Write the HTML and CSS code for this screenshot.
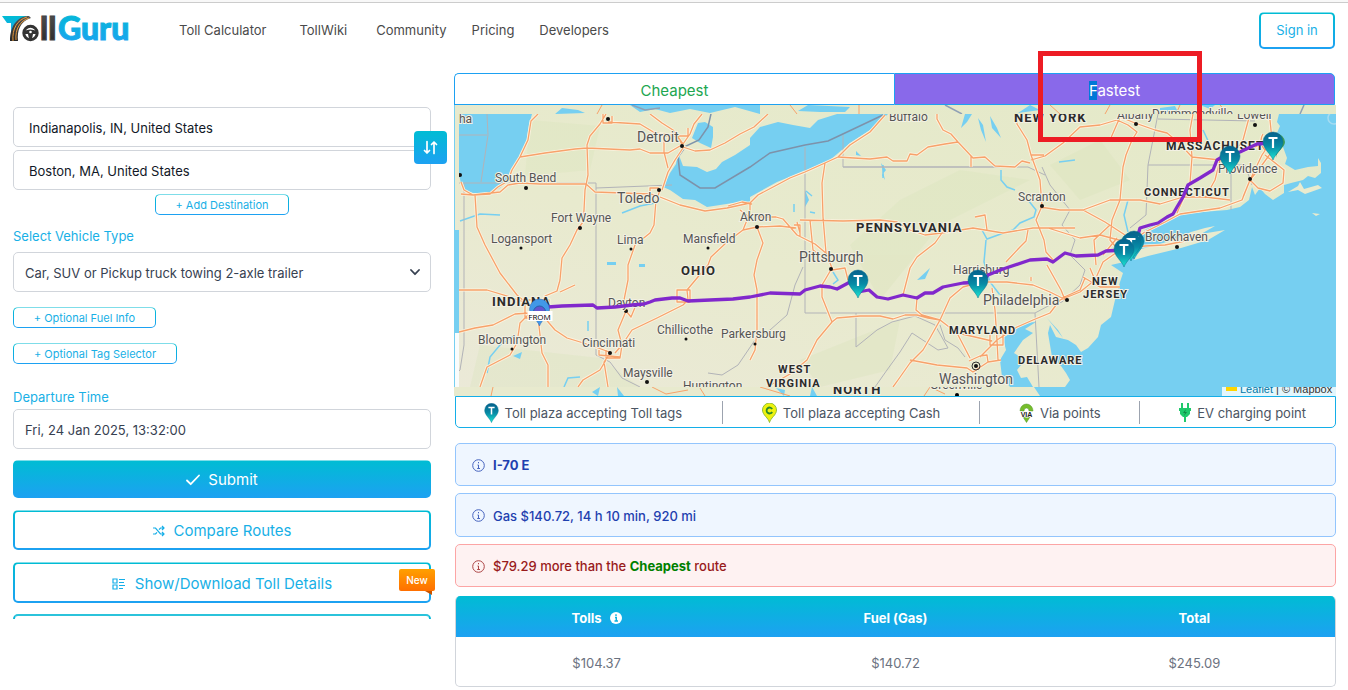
FILE: index.html
```html
<!DOCTYPE html>
<html lang="en">
<head>
<meta charset="utf-8">
<meta name="viewport" content="width=device-width, initial-scale=1">
<title>TollGuru</title>
<link rel="stylesheet" href="styles.css">
</head>
<body>
<header class="site-header">
  <a class="logo" href="#" aria-label="TollGuru home">
    <svg width="134" height="32" viewBox="0 0 134 32">
      <defs>
        <linearGradient id="brand" x1="0" y1="0" x2="0" y2="1"><stop offset="0" stop-color="#00bcd4"/><stop offset="1" stop-color="#1da1f2"/></linearGradient>
        <linearGradient id="tar" x1="0" y1="0" x2="0" y2="1"><stop offset="0" stop-color="#555"/><stop offset="1" stop-color="#262626"/></linearGradient>
      </defs>
      <path d="M2 2H29L19 8 14 14 11 22V9H7Z" fill="url(#brand)"/>
      <path d="M29 2C19 2 10 10 10 27H18C17 17 20 7 31 4Z" fill="url(#tar)"/>
      <path d="M27 3C17 6 12 15 13 27M29 4C20 7 15 15 16 26" fill="none" stroke="#e99a3c" stroke-width="1"/>
      <circle cx="30.500" cy="19" r="6.700" fill="#fff" stroke="#333" stroke-width="3"/>
      <path d="M24 17Q30 14 37 17L36 20 33 20 32 25H29L28 20 25 20Z" fill="#333"/>
      <circle cx="30.500" cy="18" r="1.300" fill="#fff"/>
      <text class="logo-text" x="40" y="26" fill="url(#tar)" stroke="#444">ll</text>
      <text class="logo-text" x="58" y="26" fill="url(#brand)" stroke="url(#brand)">Guru</text>
    </svg>
  </a>
  <nav class="nav">
    <a href="#">Toll Calculator</a>
    <a href="#">TollWiki</a>
    <a href="#">Community</a>
    <a href="#">Pricing</a>
    <a href="#">Developers</a>
  </nav>
  <button class="outline sign-in" type="button">Sign in</button>
</header>

<main class="layout">
  <form class="planner">
    <div class="stops">
      <input class="field stop" type="text" aria-label="From" value="Indianapolis, IN, United States">
      <input class="field stop" type="text" aria-label="To" value="Boston, MA, United States">
      <button class="swap" type="button" aria-label="Swap origin and destination">
        <svg width="15" height="15" viewBox="0 0 15 15" fill="none" stroke="#fff" stroke-width="1.700" stroke-linecap="round" stroke-linejoin="round"><path d="M4 1.500V13M1.500 10.500 4 13 6.500 10.500M11 13.500V2M8.500 4.500 11 2 13.500 4.500"/></svg>
      </button>
    </div>
    <button class="outline small add" type="button">+ Add Destination</button>

    <label class="label vehicle-label" for="vehicle">Select Vehicle Type</label>
    <div class="select-wrap">
      <select class="field" id="vehicle"><option>Car, SUV or Pickup truck towing 2-axle trailer</option></select>
      <svg class="chevron" width="10" height="7" viewBox="0 0 10 7"><path d="M1 1 5 5.200 9 1" fill="none" stroke="#374151" stroke-width="1.800" stroke-linecap="round" stroke-linejoin="round"/></svg>
    </div>
    <button class="outline small fuel" type="button">+ Optional Fuel Info</button>
    <button class="outline small tag" type="button">+ Optional Tag Selector</button>

    <label class="label time-label" for="departure">Departure Time</label>
    <input class="field" id="departure" type="text" value="Fri, 24 Jan 2025, 13:32:00">

    <button class="submit" type="submit">
      <svg width="14" height="12" viewBox="0 0 14 12"><path d="M1 6.500 4.700 10.200 13 1.500" fill="none" stroke="#fff" stroke-width="1.800" stroke-linecap="round" stroke-linejoin="round"/></svg>
      Submit
    </button>
    <button class="outline wide" type="button">
      <svg width="12" height="12" viewBox="0 0 12 12" fill="none" stroke="#14aee8" stroke-width="1.200"><path d="M0 3H2.500L7.500 9H11M0 9H2.500L4 7.300M6 4.700 7.500 3H11M9 1 11 3 9 5M9 7 11 9 9 11"/></svg>
      Compare Routes
    </button>
    <button class="outline wide" type="button">
      <svg width="14" height="12" viewBox="0 0 14 12" fill="none" stroke="#14aee8" stroke-width="1.200"><path d="M1 1H5V5H1ZM1 7H5V11H1ZM7 1.500H13M7 4.500H12M7 7.500H13M7 10.500H11"/></svg>
      Show/Download Toll Details
      <span class="new">New</span>
    </button>
    <div class="more"></div>
  </form>

  <section class="results">
    <div class="tabs">
      <button class="tab cheapest" type="button">Cheapest</button>
      <button class="tab fastest" type="button"><span><mark>F</mark>astest</span></button>
      <div class="highlight"></div>
    </div>

    <div class="map">
      <svg class="map-canvas" viewBox="454 105 882 291" preserveAspectRatio="xMidYMid slice" role="img" aria-label="Route from Indianapolis to Boston">
        <defs>
          <linearGradient id="land" x1="0" y1="1" x2="1" y2="0"><stop offset="0" stop-color="#ebe9d8"/><stop offset=".4" stop-color="#e8eace"/><stop offset="1" stop-color="#e4e9c8"/></linearGradient>
          <linearGradient id="pin" x1="0" y1="0" x2="0" y2="1"><stop offset="0" stop-color="#05608c"/><stop offset=".5" stop-color="#078aa5"/><stop offset="1" stop-color="#1ce6d2"/></linearGradient>
          <clipPath id="main"><rect x="459" y="114" width="877" height="273"/></clipPath>
          <clipPath id="strip-top"><rect x="454" y="105" width="882" height="9"/></clipPath>
          <clipPath id="strip-bottom"><rect x="454" y="387" width="882" height="9"/></clipPath>
          <g id="toll-pin"><path d="M0 0C-2-6-10-11-10-18A10 10 0 1 1 10-18C10-11 2-6 0 0Z" fill="url(#pin)" stroke="#0b6f8c" stroke-width=".5"/><path d="M-4.500-22H4.500M0-22V-12" stroke="#fff" stroke-width="2.200"/></g>
          <path id="roads" d="M538 114L531 121 528 140 520 157 512 170 508 181 498 187 490 194 473 195 461 194M461 182L464 190 473 195 500 192 508 185 520 183 540 184 586 184 595 192 650 194 658 196 660 190M650 194V188H659
          M520 157L545 153 575 149 587 148 630 150 640 149 650 153 668 153 680 146M606 114L600 124 590 136 587 145 588 175 585 190 584 210 583 222 577 230 570 245 562 258 560 280 557 291 545 296 540 308M603 114V123H612V116M608 122L640 124 655 133 677 136 683 146M650 114L662 123 673 130 683 144M702 114L694 124 690 134 683 144M664 136H688V128M683 147L695 151 710 150 725 143 740 134 754 127 768 114M683 148L675 160 668 172 662 190M664 136V152L668 168
          M660 197L680 205 705 211 727 208 750 203 758 195 775 186 790 178 805 172 825 163 838 157 850 145 870 132 885 115M728 206L742 202 752 204M740 210L748 216M750 203L750 214 759 217 776 217 783 219 790 227 797 235 815 244 827 254M838 157L870 159 887 157 893 161 907 161 910 154 917 155 928 147 945 144 958 142 973 158 985 157 995 166 1015 167 1022 161 1030 163M937 114V119L943 130 951 134 958 142M971 156V167M1017 114V124L1027 140 1031 155 1040 180 1042 206 1036 220 1044 240 1046 252 1055 262M1031 160L1045 156 1063 143 1080 127 1100 125 1117 120 1128 125M1031 155H1044
          M656 200L654 225 650 233 635 245 628 265 628 280 624 300 626 311 618 330 622 345 615 353M626 311L631 317 636 305M743 230L727 242 711 257 708 265 687 290 688 300 683 305 657 318 632 330 622 345 620 358H606V350M677 290H690V302H677ZM750 212L747 220 743 230 757 227 780 226 796 228M757 227L763 243 757 260 754 275 757 290 757 330 755 350 750 360M800 220L843 221 880 220 897 222 910 230 925 235 942 233 973 228 1003 233 1033 228 1075 228M942 233L935 243 917 257 910 268 903 295M825 163L822 183 823 217 826 253M797 222L800 233M810 220L813 250 830 262M794 225H800V236M975 217L985 215 987 230
          M826 253L832 268 822 285 822 297 832 322 817 340 807 360 790 374 767 387M832 270L845 268 848 280M832 322L837 318 860 316 880 316 893 319 905 315 917 315 928 318 940 320 957 333 970 358M903 295L917 298 916 310 922 315 940 320 950 298 963 287 978 283M940 320L930 338 923 350 910 363 898 380 893 387M910 360L937 365 967 368 973 372 988 362 987 355 980 356 969 361M988 362L1001 360M957 333L975 337 992 341M980 357L997 340 1017 327 1033 320 1050 313 1060 300 1080 292 1095 280 1103 262 1120 250 1130 242 1145 232 1165 222 1180 214 1220 208 1242 200 1250 180 1262 155 1272 140M990 333H1003V345H990ZM992 288L995 310 997 340 998 360M983 282L1007 282 1033 285 1050 292 1062 298 1080 290 1085 278M1047 265L1061 290 1065 300M1031 281V277M1006 262L1020 247 1026 241 1028 230
          M475 195L477 227 485 245 500 273 517 295 532 308M459 290H487L510 297 532 305M459 332L475 328 493 325 515 314 530 313M538 317L542 353 548 365 548 387M543 316L555 330 567 338 590 345 612 353M530 313L520 323 517 343 510 355 487 367 480 387M525 300H549V318H525ZM611 352L604 362 608 387M606 360L600 370 583 380 578 387M599 350V355L620 357M560 292L575 285
          M1128 125L1137 132 1132 140 1126 155 1123 167 1120 200 1112 220 1110 240 1120 252M1120 117L1135 123 1155 130 1167 133 1178 142 1192 157 1220 160 1240 152 1270 142M1193 114L1190 130 1192 157 1190 183 1177 213M1040 207L1060 210 1083 210 1110 200 1140 200 1160 204 1183 197 1205 197 1230 200M1083 210L1105 222 1125 235M1250 114L1243 140 1230 158M1259 114L1270 120 1273 150 1262 165 1250 180 1243 197M1263 134Q1258 142 1265 150M1220 160L1215 180 1205 198M1250 180L1258 188 1270 191 1283 183 1284 170 1265 155M1048 228L1080 238 1100 235 1130 243M1096 265L1094 240 1110 225M1126 248L1145 246 1165 245 1185 241M1117 238L1103 255M1095 280L1090 268M1083 277L1100 287H1120M1110 140L1120 117"/>
        </defs>
        <rect x="454" y="105" width="882" height="291" fill="url(#land)"/>
        <g clip-path="url(#main)">
          <g fill="#d8e3b9" opacity=".3"><path d="M850 245L900 200 960 170 1030 180 940 225 880 300Z"/><path d="M530 120L600 126 590 170 525 176Z"/><path d="M1050 165L1100 140 1130 180 1080 200Z"/><path d="M800 360L900 320 890 370 820 387Z"/><path d="M480 345L600 358 640 387 470 387Z"/></g>
          <g fill="#76cff1">
            <path d="M459 114H532L529 125 527 137 526 147 520 157 512 170 508 180 500 188 490 193 473 193 465 190 461 183 459 175Z"/>
            <path d="M698 123L705 122 713 127 713 137 711 148 700 143 692 138Z"/>
            <path d="M678 152L680 158 683 166 697 167 707 172 716 169 722 162 735 155 750 145 750 138 760 127 778 122 793 125 810 128 818 120 837 114H888L873 128 850 143 830 160 807 170 777 182 750 197V202L733 203 707 207 695 200 683 199 670 190 663 187 670 173 676 164Z"/>
            <path d="M1336 114H1279L1277 122 1280 126 1277 133 1283 147 1287 158 1285 164 1295 170 1308 167 1318 166 1318 158 1321 163 1321 173 1315 178 1308 176 1303 180 1291 183 1284 185 1284 193 1273 200 1265 194 1260 188 1255 195 1252 187 1249 200 1240 207 1227 210 1190 213 1167 218 1158 223 1145 230 1137 240 1130 255 1124 262 1111 265 1123 273 1120 282 1115 300 1111 317 1101 325 1098 337 1088 348 1081 352 1076 345 1068 340 1056 337 1050 325 1048 333 1050 345 1052 357 1061 366 1066 373 1070 380 1065 387H1336Z"/>
            <path d="M1036 322L1023 323 1013 330 1003 338 1006 350 1000 360 1002 377 1010 387H1033L1027 377 1021 378 1017 370 1025 360 1014 353 1023 340 1033 333 1025 329Z"/>
            <path d="M965 114L961 128 967 122 972 114M978 118L983 125 986 142 981 130M990 116L997 128 1001 138 992 128M881 163L886 170 882 175 885 180M805 190L809 200 805 207M806 190L810 194M960 120V127M1181 190L1190 202M1047 318L1058 330 1063 338"/>
            <path d="M607 262H616V265H607ZM639 264H645V267H639ZM513 356L522 352 520 359ZM917 280L930 268 925 279ZM856 151L861 156 856 155Z"/>
          </g>
          <path d="M1134 260L1141 249 1157 245 1178 238 1191 232 1205 228 1215 226 1201 234 1225 230 1208 240 1181 248 1148 256Z" fill="#e9ebcf"/>
          <path d="M1288 192L1298 186 1300 182 1304 189 1318 185 1322 188 1305 194 1298 190ZM1312 213L1320 214 1316 216Z" fill="#e9ebcf"/>
          <g fill="none" stroke="#76cff1" stroke-width="1.500">
            <path d="M1001 170V180L1007 187 1015 190M1028 200L1036 210 1034 217 1020 223 1013 230 998 235 987 239 982 230M986 240L984 262 990 282 1000 295M515 335L500 345 490 357 487 373M588 321V331M622 213L640 206 655 203M833 272L838 280 833 284M460 221L480 214 500 215M1128 200L1124 215 1128 232M564 387L568 378 580 377M883 165V178M806 191L812 196M810 212L815 213M794 204V212M1203 130L1210 145M1059 162L1075 160"/>
          </g>
          <g fill="none" stroke="#b2b3b8" stroke-width="1">
            <path d="M464 183V345L460 370 450 380M459 183H596V355L610 362 622 378 640 387M596 188L672 185M459 135H487M487 114L488 135 481 182M805 147V313H1035M843 135V167H1028L1045 175M843 167H1000M856 313V347L877 330 892 322 915 316 935 325 948 348 938 350 912 333 900 352 887 370 875 387M803 267L795 285 787 315 770 330 755 340 738 365 722 375 708 373M940 325L945 340 958 348 965 357M1035 313L1039 387M1035 313L1050 305 1062 302 1080 285 1085 270 1070 255 1075 240 1062 225 1070 210 1050 185 1042 167M1158 114L1148 165H1231V210M1148 165L1146 215 1130 228M1158 119L1255 121M1231 165L1245 165 1252 185"/>
          </g>
          <path d="M713 105L708 127 699 140 686 146 678 157 680 175 700 188 715 188 750 167 770 153 805 145 828 141 845 133 883 115" fill="none" stroke="#7d92aa" stroke-width="1.500"/>
          <use href="#roads" fill="none" stroke="#fbf3df" stroke-width="3"/>
          <use href="#roads" fill="none" stroke="#f7a26b" stroke-width="1.300" stroke-linejoin="round"/>
          <g fill="#111"><circle cx="608" cy="119" r="2"/><circle cx="682" cy="146" r="2"/><circle cx="526" cy="188" r="2"/><circle cx="460" cy="175" r="2"/><circle cx="659" cy="190" r="2"/><circle cx="580" cy="228" r="2"/><circle cx="757" cy="227" r="2"/><circle cx="521" cy="248" r="1.500"/><circle cx="631" cy="249" r="1.500"/><circle cx="708" cy="248" r="1.500"/><circle cx="831" cy="269" r="2"/><circle cx="1042" cy="206" r="2"/><circle cx="1136" cy="124" r="2"/><circle cx="1255" cy="125" r="2"/><circle cx="1250" cy="179" r="2"/><circle cx="1177" cy="247" r="2"/><circle cx="1067" cy="300" r="2"/><circle cx="626" cy="311" r="2"/><circle cx="512" cy="349" r="1.500"/><circle cx="610" cy="353" r="2"/><circle cx="686" cy="339" r="1.500"/><circle cx="755" cy="344" r="1.500"/><circle cx="647" cy="382" r="2"/><circle cx="976" cy="366" r="2"/></g>
          <circle cx="976" cy="366" r="4" fill="none" stroke="#333"/>
          <g class="city">
            <text x="459" y="123">ha</text><text class="big" x="637" y="142">Detroit</text><text x="495" y="182">South Bend</text><text class="big" x="617" y="203">Toledo</text><text x="551" y="222">Fort Wayne</text><text x="491" y="243">Logansport</text><text x="617" y="244">Lima</text><text x="683" y="243">Mansfield</text><text x="740" y="221">Akron</text><text x="889" y="121">Buffalo</text><text class="big" x="799" y="262">Pittsburgh</text><text x="1018" y="201">Scranton</text><text x="953" y="274">Harrisburg</text><text class="big" x="983" y="305">Philadelphia</text><text class="big" x="939" y="384">Washington</text><text x="1145" y="241">Brookhaven</text><text x="1218" y="173">Providence</text><text x="1117" y="119">Albany</text><text x="1237" y="119">Lowell</text><text x="608" y="307">Dayton</text><text x="478" y="344">Bloomington</text><text x="582" y="347">Cincinnati</text><text x="657" y="334">Chillicothe</text><text x="721" y="338">Parkersburg</text><text x="623" y="377">Maysville</text><text x="683" y="390">Huntington</text>
          </g>
          <g class="state"><text x="492" y="306">INDIANA</text><text x="681" y="275">OHIO</text><text x="856" y="232">PENNSYLVANIA</text><text x="1014" y="122">NEW YORK</text><text class="mid" x="1166" y="150">MASSACHUSET</text><text class="sm" x="1144" y="196">CONNECTICUT</text><text class="sm" x="1092" y="285">NEW</text><text class="sm" x="1083" y="298">JERSEY</text><text class="sm" x="949" y="334">MARYLAND</text><text class="sm" x="1018" y="364">DELAWARE</text><text class="sm" x="778" y="373">WEST</text><text class="sm" x="766" y="387">VIRGINIA</text></g>
          <path d="M538 309L548 307 562 306 593 305 597 308 615 307 632 305 644 304 650 302 655 300 672 298 680 298 688 301 710 300 733 299 750 297 770 293 800 294 805 290 820 286 830 287 837 289 850 282 858 292 869 290 877 297 888 299 903 295 917 298 925 293 933 293 943 287 963 283 983 282 988 275 1003 269 1030 260 1047 259 1053 262 1065 253 1076 256 1098 255 1106 251 1123 250 1138 235 1140 228 1150 225 1158 223 1167 217 1173 214 1177 207 1183 197 1188 185 1200 178 1213 170 1217 160 1222 157 1240 152 1257 144 1272 143" fill="none" stroke="#8128cc" stroke-width="3.300" stroke-linejoin="round"/>
          <g transform="translate(1334 118)" fill="none" stroke="#a5dcf2" stroke-width="1.500"><circle r="6"/></g>
        </g>
        <g clip-path="url(#strip-top)">
          <path d="M555 114L562 108 578 110 585 113ZM630 105L640 112 655 109 670 113 690 109 710 113 735 107 760 114V105ZM798 111L808 105 850 107 845 112 820 112ZM1018 113L1030 105 1040 110ZM1160 108L1175 106 1178 112 1160 112ZM1200 105H1215L1210 109Z" fill="#76cff1"/>
          <path d="M602 105L597 114M790 105L797 114M859 105V114M1050 105L1060 114M1110 105L1105 114M1180 105L1176 114M1220 105L1228 114" stroke="#f7a26b" fill="none"/>
          <path d="M945 105L962 114M632 105L645 110 660 108M1304 105L1300 114" stroke="#8fa0b5" fill="none" stroke-width="1.500"/>
          <g class="city"><text x="1152" y="118">Drummondville</text></g>
        </g>
        <path d="M455 230H459V333H455Z" fill="#76cff1"/><path d="M455 333H459V387H455Z" fill="#f9fcfc"/><path d="M454 105H455V387H454Z" fill="#76cff1"/>
        <g clip-path="url(#strip-bottom)">
          <rect x="454" y="387" width="882" height="9" fill="#e8eace"/>
          <path d="M592 392L600 387 598 396M617 387L624 396H618ZM776 388L785 390 784 396ZM812 387L817 396H810ZM1034 387H1336V396H1040Z" fill="#76cff1"/>
          <path d="M493 387L491 396M652 387L666 394 688 390M700 388L705 396M760 387L790 396M924 396L930 387 945 394" stroke="#f7a26b" fill="none"/>
          <g class="state"><text x="833" y="394">NORTH</text></g>
          <g class="city"><text x="930" y="389">Greenville</text></g><circle cx="957" cy="395" r="2"/>
        </g>
        <g transform="translate(539.500 326)"><path d="M0 0C-2-6-10-11-10-17A10 10 0 1 1 10-17C10-11 2-6 0 0Z" fill="#4298e8" stroke="#2b64b5" stroke-width=".500"/><path d="M-6-14A6 6 0 0 1 6-14" fill="#6455d0" stroke="#2461aa"/><rect x="-12" y="-15" width="25" height="10" fill="#fff"/><text class="from" x="0" y="-6">FROM</text></g>
        <use href="#toll-pin" x="858" y="298"/><use href="#toll-pin" x="978" y="298"/><use href="#toll-pin" x="1134" y="259"/><use href="#toll-pin" x="1131" y="261"/><use href="#toll-pin" x="1124" y="267"/><use href="#toll-pin" x="1230" y="174"/>
        <path d="M1276 158C1276 151 1285 148 1285 142A10 10 0 0 0 1276 133Z" fill="#3e9b58"/><use href="#toll-pin" x="1273" y="160"/>
      </svg>
      <div class="attribution"><i class="flag"></i><a href="#">Leaflet</a> <span>| © Mapbox</span></div>
    </div>

    <ul class="legend">
      <li class="key tags"><svg width="15" height="20" viewBox="-10.500 -28.500 21 29"><use href="#toll-pin"/></svg>Toll plaza accepting Toll tags</li>
      <li class="key"><svg width="15" height="20" viewBox="0 0 15 20"><path d="M7.500 19.500C6.500 15 .5 12 .5 7A7 7 0 0 1 14.500 7C14.500 12 8.500 15 7.500 19.500Z" fill="#eef30d" stroke="#93bd38"/><path d="M10.200 6A3 3 0 1 0 10.200 9" fill="none" stroke="#2c8a2b" stroke-width="1.800"/></svg>Toll plaza accepting Cash</li>
      <li class="key"><svg width="15" height="20" viewBox="0 0 15 20"><path d="M1 8A6.500 7 0 0 1 14 8L10 8A2.500 3 0 0 0 5 8ZM4 14H11L7.500 19.500Z" fill="#76bd2b" stroke="#4c9425" stroke-width=".500"/><text class="via-text" x="7.500" y="14">VIA</text></svg>Via points</li>
      <li class="key ev"><svg width="12" height="20" viewBox="0 0 12 20" fill="#1fc96b"><path d="M2 0H4V5H8V0H10V5H12V8H11V11L8 14H7V19H5V14H4L1 11V8H0V5H2Z"/><path d="M7 6L4 10H6L5 13 8 9H6Z" fill="#128a46"/></svg>EV charging point</li>
    </ul>

    <div class="alerts">
      <div class="alert info"><svg class="info-icon" width="13" height="13" viewBox="0 0 13 13"><circle cx="6.500" cy="6.500" r="5.800"/><path d="M6.500 3V4.300M5.500 6H6.500V9.500M5.200 9.500H8"/></svg><strong>I-70 E</strong></div>
      <div class="alert info"><svg class="info-icon" width="13" height="13" viewBox="0 0 13 13"><circle cx="6.500" cy="6.500" r="5.800"/><path d="M6.500 3V4.300M5.500 6H6.500V9.500M5.200 9.500H8"/></svg><span>Gas $140.72, 14 h 10 min, 920 mi</span></div>
      <div class="alert danger"><svg class="info-icon" width="13" height="13" viewBox="0 0 13 13"><circle cx="6.500" cy="6.500" r="5.800"/><path d="M6.500 3V4.300M5.500 6H6.500V9.500M5.200 9.500H8"/></svg><span>$79.29 more than the <b>Cheapest</b> route</span></div>
    </div>

    <div class="table-box">
      <table class="costs">
        <thead><tr><th>Tolls <svg class="tip" width="12" height="12" viewBox="0 0 12 12"><circle cx="6" cy="6" r="6" fill="#fff"/><path d="M6 2.300V4M5 5.500H6.300V9M4.500 9H8" fill="none" stroke="#0ab1df" stroke-width="1.400"/></svg></th><th>Fuel (Gas)</th><th>Total</th></tr></thead>
        <tbody><tr><td>$104.37</td><td>$140.72</td><td>$245.09</td></tr></tbody>
      </table>
    </div>
  </section>
</main>
</body>
</html>
```

FILE: styles.css
```css
* { box-sizing: border-box; }

body {
  margin: 0;
  border-top: 2px solid #f8f8f8;
  background: #fff;
  color: #374151;
  font: 13px/16px Inter, "Liberation Sans", sans-serif;
}

button, input, select { font: inherit; color: inherit; }
button { cursor: pointer; padding: 0; }
a { color: inherit; text-decoration: none; }

.site-header {
  display: flex;
  align-items: center;
  height: 55px;
  padding-right: 13px;
  border-top: 1px solid #ccc;
}
.logo { display: flex; }
.logo-text { font: 900 32px Lato, sans-serif; stroke-width: 1px; }
.nav { display: flex; gap: 25px; margin: 0 auto 0 45px; color: #4a4a4a; }
.nav a:nth-child(2) { margin-left: 8px; }
.nav a:nth-child(3) { margin-left: 4px; }

.outline {
  position: relative;
  display: flex;
  align-items: center;
  justify-content: center;
  gap: 9px;
  border: 2px solid transparent;
  border-radius: 5px;
  background:
    linear-gradient(#fff, #fff) padding-box,
    linear-gradient(#7fdde9 0 1px, #00bcd4 1px, #1da1f2) border-box;
  color: #18b0e6;
}
.sign-in { width: 76px; height: 37px; }

.layout {
  display: grid;
  grid-template-columns: minmax(0, 418fr) minmax(0, 882fr);
  gap: 23px;
  padding: 0 12px 0 13px;
}

.planner { display: flex; flex-direction: column; padding-top: 50px; }
.stops { position: relative; display: flex; flex-direction: column; gap: 3px; }
.field {
  width: 100%;
  height: 40px;
  padding: 2px 11px 0;
  border: 1px solid #d1d5db;
  border-radius: 5px;
  background: #fff;
}
.stop { padding-left: 15px; color: #111827; }
.swap {
  position: absolute;
  top: 24px;
  right: -16px;
  display: flex;
  align-items: center;
  justify-content: center;
  width: 33px;
  height: 33px;
  border: 0;
  border-radius: 4px;
  background: linear-gradient(#00bcd4, #1da1f2);
}
.small { height: 21px; border-width: 1px; font-size: 11px; }
.add { width: 134px; align-self: center; margin-top: 4px; }
.fuel { width: 143px; margin-top: 15px; }
.tag { width: 164px; margin-top: 15px; }
.label { color: #18b0e6; }
.vehicle-label { margin: 13px 0 8px; }
.time-label { margin: 25px 0 4px; }
.select-wrap { position: relative; }
.select-wrap .field { display: block; appearance: none; }
.chevron { position: absolute; top: 17px; right: 11px; pointer-events: none; }

.submit {
  display: flex;
  align-items: center;
  justify-content: center;
  gap: 8px;
  height: 38px;
  margin-top: 11px;
  padding-top: 2px;
  border: 0;
  border-radius: 5px;
  background: linear-gradient(#7fdde9 0 1px, #00bcd4 1px, #1da1f2);
  color: #fff;
  font-size: 15px;
}
.wide { height: 41px; margin-top: 12px; padding-top: 2px; font-size: 15px; }
.submit + .wide { height: 40px; }
.new {
  position: absolute;
  top: 5px;
  right: -6px;
  width: 36px;
  height: 22px;
  border-radius: 2px;
  background: linear-gradient(#ffa000, #ff6f00);
  color: #fff;
  font-size: 10px;
  line-height: 22px;
  font-weight: 500;
}
.new::after {
  content: "";
  position: absolute;
  top: 22px;
  right: 3px;
  border-top: 4px solid #c65300;
  border-left: 7px solid transparent;
}
.more {
  height: 5px;
  margin-top: 11px;
  border: 2px solid #08b8da;
  border-top-color: #2bc3db;
  border-bottom: 0;
  border-radius: 5px 5px 0 0;
}

.results { padding-top: 16px; }
.tabs { position: relative; display: flex; height: 32px; margin-right: 1px; }
.tab {
  flex: 1;
  padding-top: 3px;
  border: 1px solid #1da1f2;
  background: #fff;
  font-size: 15px;
}
.cheapest { border-right: 0; border-radius: 5px 0 0 0; color: #21a650; }
.fastest { border-radius: 0 5px 0 0; background: #8969ea; color: #fff; }
.fastest mark { background: #0078d7; color: #fff; }
.highlight {
  position: absolute;
  z-index: 2;
  top: -22px;
  right: 133px;
  width: 164px;
  height: 91px;
  border: 5px solid #ed1c24;
  pointer-events: none;
}

.map { position: relative; height: 291px; overflow: hidden; }
.map-canvas { display: block; width: 100%; height: 100%; }
.city text, .state text {
  font-family: Roboto, "Noto Sans", sans-serif;
  font-size: 12px;
  fill: #555;
  stroke: #f3f1e4;
  stroke-width: 2px;
  paint-order: stroke;
}
.city .big { font-size: 14px; }
.state text { font-size: 13px; font-weight: 700; letter-spacing: 1px; fill: #2b2b2b; }
.state .mid { font-size: 12px; }
.state .sm { font-size: 11px; }
.from { font: 8px "Open Sans", sans-serif; text-anchor: middle; fill: #000; }
.attribution {
  position: absolute;
  right: 0;
  bottom: 0;
  display: flex;
  align-items: flex-end;
  gap: 3px;
  width: 114px;
  height: 9px;
  padding-left: 4px;
  overflow: hidden;
  background: rgba(255, 255, 255, .8);
  color: #333;
  font: 11px/13px "Liberation Sans", sans-serif;
  white-space: nowrap;
}
.attribution a { color: #0078a8; }
.flag { width: 11px; height: 4px; margin-bottom: 5px; background: #ffd500; }

.legend {
  display: grid;
  grid-template-columns: 266fr 258fr 160fr 196fr;
  height: 32px;
  margin: 0 0 15px 1px;
  padding: 4px 0 3px;
  border: 1px solid #14aee8;
  border-radius: 0 0 5px 5px;
  list-style: none;
  color: #4b5563;
}
.key { display: flex; align-items: center; justify-content: center; gap: 6px; }
.key + .key { border-left: 1px solid #9ca3af; }
.tags { padding-right: 12px; }
.via-text { font: 700 7px "Liberation Sans", sans-serif; text-anchor: middle; fill: #222; stroke: #fff; stroke-width: 1px; paint-order: stroke; }
.ev { padding-left: 10px; }

.alerts { display: grid; gap: 7px; margin: 0 0 9px 1px; }
.alert {
  display: flex;
  align-items: center;
  gap: 8px;
  height: 43px;
  padding: 1px 16px 0;
  border: 1px solid #93c5fd;
  border-radius: 5px;
  background: #eff6ff;
  color: #1e40af;
  font-weight: 500;
}
.info + .info { height: 44px; }
.alert strong, .alert b { font-weight: 700; }
.danger { border-color: #fca5a5; background: #fef2f2; color: #991b1b; }
.danger b { color: #008000; }
.info-icon { fill: none; stroke: currentColor; stroke-width: 1px; opacity: .8; }

.table-box {
  margin-left: 1px;
  border: 1px solid #d1d5db;
  border-top: 0;
  border-radius: 5px;
  overflow: hidden;
}
.costs { width: 100%; table-layout: fixed; border-collapse: collapse; text-align: center; }
.costs thead { background: linear-gradient(#00bcd4, #1da1f2); color: #fff; }
.costs th { height: 41px; padding: 2px 0 0; font-weight: 700; }
.costs th:first-child, .costs th:last-child { width: 32%; }
.costs td { height: 49px; padding: 2px 0 0; color: #6b7280; }
.tip { margin-left: 5px; vertical-align: -1px; }
```
